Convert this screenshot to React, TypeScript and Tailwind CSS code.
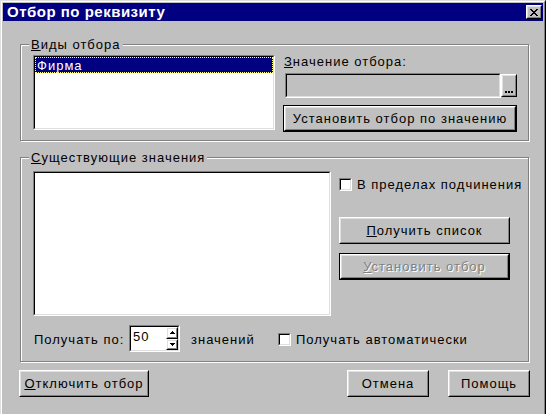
import React from 'react';

const raisedOuter = 'border border-t-white border-l-white border-r-black border-b-black';
const raisedInner = 'border border-t-[#dfdfdf] border-l-[#dfdfdf] border-r-[#808080] border-b-[#808080]';
const sunkenOuter = 'border border-t-[#808080] border-l-[#808080] border-r-white border-b-white';
const sunkenInner = 'border border-t-black border-l-black border-r-[#dfdfdf] border-b-[#dfdfdf]';

function Button({
  children,
  className = '',
  isDefault = false,
  disabled = false,
}: {
  children: React.ReactNode;
  className?: string;
  isDefault?: boolean;
  disabled?: boolean;
}) {
  return (
    <div className={`flex shrink-0 ${isDefault ? 'border border-black' : ''} ${className}`}>
      <div className={`flex flex-1 ${raisedOuter}`}>
        <div
          className={`flex flex-1 items-center justify-center ${raisedInner} ${
            disabled ? 'text-[#808080] [text-shadow:1px_1px_0_#fff]' : ''
          }`}
        >
          {children}
        </div>
      </div>
    </div>
  );
}

function Sunken({ children, className = '', inner = '' }: { children?: React.ReactNode; className?: string; inner?: string }) {
  return (
    <div className={`flex shrink-0 ${sunkenOuter} ${className}`}>
      <div className={`flex flex-1 ${sunkenInner} ${inner}`}>{children}</div>
    </div>
  );
}

function Checkbox({ label }: { label: string }) {
  return (
    <div className="flex items-center">
      <Sunken className="w-[13px] h-[13px]" inner="bg-white" />
      <span className="ml-[5px] whitespace-nowrap">{label}</span>
    </div>
  );
}

function Group({
  label,
  className = '',
  children,
}: {
  label: React.ReactNode;
  className?: string;
  children: React.ReactNode;
}) {
  return (
    <div className={`relative shrink-0 border border-[#808080] shadow-[1px_1px_0_#fff,inset_1px_1px_0_#fff] ${className}`}>
      {/* label sits over the etched top line */}
      <span className="absolute left-[8px] top-[-8px] px-[2px] bg-[#c0c0c0] whitespace-nowrap">{label}</span>
      {children}
    </div>
  );
}

function CloseGlyph() {
  return (
    <svg width="8" height="7" viewBox="0 0 8 7" shapeRendering="crispEdges">
      <path
        d="M0 0h2v1H0zM6 0h2v1H6zM1 1h2v1H1zM5 1h2v1H5zM2 2h4v1H2zM3 3h2v1H3zM2 4h4v1H2zM1 5h2v1H1zM5 5h2v1H5zM0 6h2v1H0zM6 6h2v1H6z"
        fill="#000"
      />
    </svg>
  );
}

function Arrow({ up }: { up?: boolean }) {
  return (
    <svg width="5" height="3" viewBox="0 0 5 3" shapeRendering="crispEdges">
      <path d={up ? 'M2 0h1v1H2zM1 1h3v1H1zM0 2h5v1H0z' : 'M0 0h5v1H0zM1 1h3v1H1zM2 2h1v1H2z'} fill="#000" />
    </svg>
  );
}

function SpinButton({ up }: { up?: boolean }) {
  return (
    <div className={`flex flex-1 ${raisedOuter}`}>
      <div className={`flex flex-1 items-center justify-center ${raisedInner}`}>
        <Arrow up={up} />
      </div>
    </div>
  );
}

export default function App() {
  return (
    <div className="w-[546px] h-[414px] overflow-hidden bg-[#c0c0c0] text-black text-[13px] leading-[15px] tracking-[1px] font-['Liberation_Sans',Arial,sans-serif]">
      {/* window frame */}
      <div className="h-[420px] border border-t-[#dfdfdf] border-l-[#dfdfdf] border-r-black border-b-black">
        <div className="h-full border border-t-white border-l-white border-r-[#808080] border-b-[#808080] p-[1px] flex flex-col">
          {/* title bar */}
          <div className="h-[18px] shrink-0 bg-[#000080] flex items-center pl-[4px] pr-[1px]">
            <span className="text-white font-bold text-[15px] leading-[18px] tracking-[0.5px]">Отбор по реквизиту</span>
            <div className={`ml-auto w-[16px] h-[14px] flex ${raisedOuter}`}>
              <div className={`flex flex-1 items-center justify-center ${raisedInner} bg-[#c0c0c0]`}>
                <CloseGlyph />
              </div>
            </div>
          </div>

          {/* client area */}
          <div className="flex flex-col pl-[17px]">
            <Group
              className="mt-[23px] w-[509px] h-[97px] pl-[12px] pt-[10px]"
              label={
                <>
                  <u className="underline-offset-1">В</u>иды отбора
                </>
              }
            >
              <div className="flex">
                <Sunken className="w-[242px] h-[75px]" inner="bg-white flex-col">
                  <div className="h-[16px] bg-[#000080] text-white border border-dotted border-[#ffff80] pl-[1px] flex items-center">
                    Фирма
                  </div>
                </Sunken>
                <div className="ml-[8px] -mt-[1px] flex flex-col">
                  <span className="pl-[1px]">
                    <u className="underline-offset-1">З</u>начение отбора:
                  </span>
                  <div className="mt-[4px] ml-[2px] flex">
                    <Sunken className="w-[216px] h-[25px]" inner="bg-[#c0c0c0]" />
                    <div className={`w-[16px] h-[23px] mt-[1px] flex ${raisedOuter}`}>
                      <div className={`flex flex-1 items-end justify-center pb-[2px] gap-[1px] ${raisedInner}`}>
                        <span className="w-[2px] h-[2px] bg-black" />
                        <span className="w-[2px] h-[2px] bg-black" />
                        <span className="w-[2px] h-[2px] bg-black" />
                      </div>
                    </div>
                  </div>
                  <Button isDefault className="mt-[7px] w-[234px] h-[27px]">
                    Установить отбор по значению
                  </Button>
                </div>
              </div>
            </Group>

            <Group
              className="mt-[16px] w-[509px] h-[205px] pl-[12px] pt-[13px]"
              label={
                <>
                  <u className="underline-offset-1">С</u>уществующие значения
                </>
              }
            >
              <div className="flex">
                <Sunken className="w-[298px] h-[145px]" inner="bg-white" />
                <div className="ml-[8px] pt-[6px] flex flex-col">
                  <Checkbox label="В пределах подчинения" />
                  <Button className="mt-[25px] w-[171px] h-[27px]">
                    <span>
                      <u className="underline-offset-1">П</u>олучить список
                    </span>
                  </Button>
                  <Button isDefault disabled className="mt-[9px] w-[171px] h-[27px]">
                    <span>
                      <u className="underline-offset-1">У</u>становить отбор
                    </span>
                  </Button>
                </div>
              </div>
              <div className="mt-[9px] flex items-center">
                <span className="ml-[1px] w-[95px] pt-[2px] whitespace-nowrap">Получать по:</span>
                <Sunken className="w-[51px] h-[27px]" inner="bg-white">
                  <span className="pl-[2px] pt-[2px] flex-1">50</span>
                  <div className="w-[12px] flex flex-col">
                    <SpinButton up />
                    <SpinButton />
                  </div>
                </Sunken>
                <span className="ml-[11px] w-[87px] pt-[2px] whitespace-nowrap">значений</span>
                <div className="pt-[2px]">
                  <Checkbox label="Получать автоматически" />
                </div>
              </div>
            </Group>

            <div className="mt-[8px] -ml-[1px] flex">
              <Button className="w-[130px] h-[27px]">
                <span>
                  <u className="underline-offset-1">О</u>тключить отбор
                </span>
              </Button>
              <Button className="ml-[198px] w-[82px] h-[27px]">Отмена</Button>
              <Button className="ml-[19px] w-[82px] h-[27px]">Помощь</Button>
            </div>
          </div>
        </div>
      </div>
    </div>
  );
}
